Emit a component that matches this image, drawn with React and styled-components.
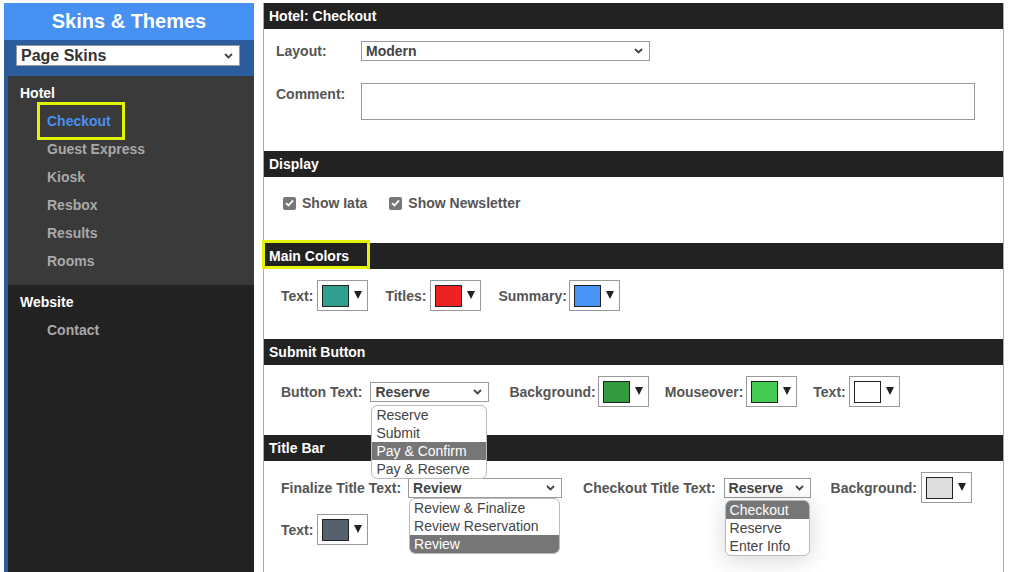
import React from "react";
import styled, { createGlobalStyle, css } from "styled-components";

const GlobalStyle = createGlobalStyle`
  html, body { margin: 0; padding: 0; background: #fff; }
  body { font-family: "Liberation Sans", Arial, sans-serif; }
  *, *::before, *::after { box-sizing: border-box; }
`;

const Page = styled.div`
  display: flex;
  gap: 9px;
  width: 1010px;
  height: 572px;
  padding: 3px 6px 0 4px;
  overflow: hidden;
`;

/* ---------- sidebar ---------- */

const Sidebar = styled.aside`
  width: 250px;
  flex: none;
  display: flex;
  flex-direction: column;
  background: #2b5c9e;
`;

const SideTitle = styled.div`
  height: 37px;
  background: #4791f2;
  color: #fff;
  font-size: 20px;
  font-weight: bold;
  display: flex;
  align-items: center;
  justify-content: center;
`;

const SkinPicker = styled.div`
  padding: 5px 14px 10px 12px;
`;

const NavGroup = styled.div`
  margin-left: 4px;
  background: ${(p) => (p.$dark ? "#222" : "#3a3a3a")};
  padding: 3px 0 ${(p) => (p.$dark ? "0" : "10px")};
  flex: ${(p) => (p.$dark ? 1 : "none")};
`;

const NavHead = styled.div`
  height: 28px;
  line-height: 28px;
  padding-left: 12px;
  color: #fff;
  font-size: 14px;
  font-weight: bold;
`;

const NavItem = styled.div`
  height: 28px;
  line-height: 28px;
  padding-left: 39px;
  font-size: 14px;
  font-weight: bold;
  color: ${(p) => (p.$active ? "#4a8ff0" : "#a9a9a9")};
`;

const Marked = styled.span`
  position: relative;
  &::after {
    content: "";
    position: absolute;
    left: -10px;
    right: -14px;
    top: -11px;
    bottom: -11px;
    border: 3px solid #e2f400;
  }
`;

/* ---------- shared controls ---------- */

const FakeSelect = styled.div`
  position: relative;
  flex: none;
  display: flex;
  align-items: center;
  justify-content: space-between;
  height: ${(p) => p.$h || 20}px;
  width: ${(p) => (p.$w ? `${p.$w}px` : "100%")};
  border: 1px solid #999;
  background: #fff;
  color: ${(p) => (p.$size ? "#333" : "#444")};
  font-weight: bold;
  font-size: ${(p) => p.$size || 14}px;
  padding: 0 6px 0 4px;
`;

const Chevron = () => (
  <svg width="9" height="6" viewBox="0 0 9 6">
    <path d="M1 1l3.5 3.5L8 1" fill="none" stroke="#444" strokeWidth="1.8" />
  </svg>
);

const OptionList = styled.ul`
  position: absolute;
  left: 0;
  right: ${(p) => p.$right || 0}px;
  top: calc(100% + ${(p) => p.$gap || 3}px);
  margin: 0;
  padding: 0;
  list-style: none;
  background: #fff;
  border: 1px solid #bbb;
  border-radius: 6px;
  overflow: hidden;
  z-index: 5;
  ${(p) =>
    p.$shadow &&
    css`
      box-shadow: 0 4px 22px rgba(0, 0, 0, 0.16);
    `}
`;

const Option = styled.li`
  height: 18px;
  line-height: 18px;
  padding-left: 4px;
  font-size: 14px;
  font-weight: normal;
  color: ${(p) => (p.$on ? "#fff" : "#444")};
  background: ${(p) => (p.$on ? "#767676" : "transparent")};
  white-space: nowrap;
`;

const Select = ({ value, width, options, selected, gap, shadow, right }) => (
  <FakeSelect $w={width}>
    <span>{value}</span>
    <Chevron />
    {options && (
      <OptionList $gap={gap} $shadow={shadow} $right={right}>
        {options.map((o) => (
          <Option key={o} $on={o === selected}>
            {o}
          </Option>
        ))}
      </OptionList>
    )}
  </FakeSelect>
);

const SwatchBox = styled.div`
  flex: none;
  width: 51px;
  height: 31px;
  border: 1px solid #999;
  display: flex;
  align-items: flex-start;
  gap: 5px;
  padding: 4px 0 0 4px;
`;

const Swatch = styled.span`
  width: 27px;
  height: 22px;
  border: 1px solid #222;
  background: ${(p) => p.$color};
`;

const Arrow = styled.span`
  margin-top: 6px;
  width: 0;
  height: 0;
  border-left: 4px solid transparent;
  border-right: 4px solid transparent;
  border-top: 8px solid #222;
`;

const ColorPick = ({ color }) => (
  <SwatchBox>
    <Swatch $color={color} />
    <Arrow />
  </SwatchBox>
);

/* ---------- main panel ---------- */

const Main = styled.main`
  width: 741px;
  flex: none;
  border-left: 1px solid #aaa;
  border-right: 1px solid #aaa;
  background: #fff;
`;

const Bar = styled.div`
  position: relative;
  height: 26px;
  line-height: 26px;
  background: #222;
  color: #fff;
  font-size: 14px;
  font-weight: bold;
  padding-left: 5px;
  ${(p) =>
    p.$mark &&
    css`
      &::after {
        content: "";
        position: absolute;
        left: -2px;
        top: -3px;
        width: ${p.$mark}px;
        height: 29px;
        border: 3px solid #e2f400;
      }
    `}
`;

const Section = styled.section`
  height: ${(p) => p.$h}px;
  padding: ${(p) => p.$pad || "11px 0 0 17px"};
  display: flex;
  flex-direction: column;
  gap: 11px;
`;

const Row = styled.div`
  display: flex;
  align-items: center;
  height: 31px;
  gap: ${(p) => p.$gap || 17}px;
`;

const Field = styled.div`
  display: flex;
  align-items: center;
  gap: ${(p) => p.$gap ?? 4}px;
  margin-right: ${(p) => p.$after || 0}px;
`;

const Label = styled.span`
  font-size: 14px;
  font-weight: bold;
  color: #555;
  white-space: nowrap;
`;

const FormGrid = styled.div`
  display: grid;
  grid-template-columns: 85px auto;
  row-gap: 22px;
  align-items: start;
  align-content: start;
  height: 122px;
  padding: 12px 0 0 12px;
`;

const GridLabel = styled(Label)`
  line-height: 20px;
  padding-top: ${(p) => p.$top || 0}px;
`;

const CommentBox = styled.div`
  width: 614px;
  height: 37px;
  border: 1px solid #999;
`;

const Checks = styled.div`
  height: 66px;
  padding: 18px 0 0 19px;
  display: flex;
  gap: 22px;
`;

const CheckItem = styled.label`
  display: flex;
  align-items: center;
  gap: 6px;
  height: 16px;
`;

const Box = styled.span`
  width: 13px;
  height: 13px;
  border-radius: 2px;
  background: #777;
  display: flex;
  align-items: center;
  justify-content: center;
`;

const Check = ({ children }) => (
  <CheckItem>
    <Box>
      <svg width="9" height="8" viewBox="0 0 9 8">
        <path d="M1 4.2l2.4 2.3L8 1.3" fill="none" stroke="#fff" strokeWidth="1.8" />
      </svg>
    </Box>
    <Label>{children}</Label>
  </CheckItem>
);

export default function App() {
  return (
    <>
      <GlobalStyle />
      <Page>
        <Sidebar>
          <SideTitle>Skins &amp; Themes</SideTitle>
          <SkinPicker>
            <FakeSelect $h={21} $size={16}>
              <span>Page Skins</span>
              <Chevron />
            </FakeSelect>
          </SkinPicker>
          <NavGroup>
            <NavHead>Hotel</NavHead>
            <NavItem $active>
              <Marked>Checkout</Marked>
            </NavItem>
            <NavItem>Guest Express</NavItem>
            <NavItem>Kiosk</NavItem>
            <NavItem>Resbox</NavItem>
            <NavItem>Results</NavItem>
            <NavItem>Rooms</NavItem>
          </NavGroup>
          <NavGroup $dark>
            <NavHead>Website</NavHead>
            <NavItem>Contact</NavItem>
          </NavGroup>
        </Sidebar>

        <Main>
          <Bar>Hotel: Checkout</Bar>
          <FormGrid>
            <GridLabel>Layout:</GridLabel>
            <Select value="Modern" width={289} />
            <GridLabel $top={1}>Comment:</GridLabel>
            <CommentBox />
          </FormGrid>

          <Bar>Display</Bar>
          <Checks>
            <Check>Show Iata</Check>
            <Check>Show Newsletter</Check>
          </Checks>

          <Bar $mark={108}>Main Colors</Bar>
          <Section $h={70}>
            <Row>
              <Field>
                <Label>Text:</Label>
                <ColorPick color="#2fa18f" />
              </Field>
              <Field>
                <Label>Titles:</Label>
                <ColorPick color="#ee2222" />
              </Field>
              <Field $gap={2}>
                <Label>Summary:</Label>
                <ColorPick color="#4a94f6" />
              </Field>
            </Row>
          </Section>

          <Bar>Submit Button</Bar>
          <Section $h={70} $pad="11px 0 0 17px">
            <Row $gap={16}>
              <Field $gap={8} $after={4}>
                <Label>Button Text:</Label>
                <Select
                  value="Reserve"
                  width={119}
                  gap={4}
                  right={1}
                  options={["Reserve", "Submit", "Pay & Confirm", "Pay & Reserve"]}
                  selected="Pay & Confirm"
                />
              </Field>
              <Field $gap={2}>
                <Label>Background:</Label>
                <ColorPick color="#339a40" />
              </Field>
              <Field $gap={3}>
                <Label>Mouseover:</Label>
                <ColorPick color="#45cb53" />
              </Field>
              <Field $gap={3}>
                <Label>Text:</Label>
                <ColorPick color="#ffffff" />
              </Field>
            </Row>
          </Section>

          <Bar>Title Bar</Bar>
          <Section $h={120} $pad="11px 0 0 17px">
            <Row>
              <Field $gap={7} $after={4}>
                <Label>Finalize Title Text:</Label>
                <Select
                  value="Review"
                  width={154}
                  gap={1}
                  right={1}
                  options={["Review & Finalize", "Review Reservation", "Review"]}
                  selected="Review"
                />
              </Field>
              <Field $gap={8} $after={3}>
                <Label>Checkout Title Text:</Label>
                <Select
                  value="Reserve"
                  width={87}
                  gap={3}
                  options={["Checkout", "Reserve", "Enter Info"]}
                  selected="Checkout"
                  shadow
                />
              </Field>
              <Field>
                <Label>Background:</Label>
                <ColorPick color="#dddddd" />
              </Field>
            </Row>
            <Row>
              <Field>
                <Label>Text:</Label>
                <ColorPick color="#566170" />
              </Field>
            </Row>
          </Section>
        </Main>
      </Page>
    </>
  );
}
